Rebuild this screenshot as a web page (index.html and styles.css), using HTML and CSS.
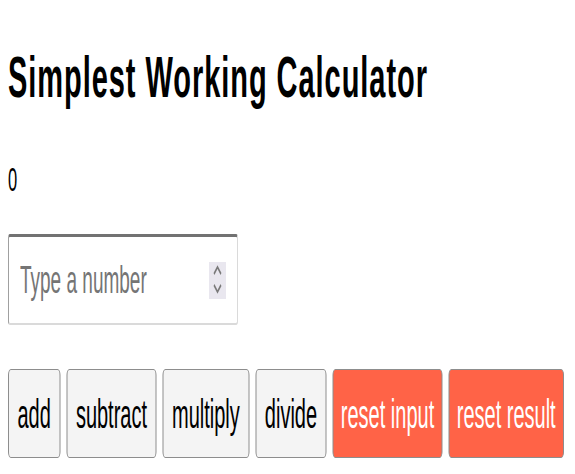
FILE: index.html
```html
<!DOCTYPE html>
<html lang="en">
<head>
<meta charset="utf-8">
<title>Simplest Working Calculator</title>
<link rel="stylesheet" href="styles.css">
</head>
<body>
<div class="page">
  <div class="stage">
    <h1 class="title">Simplest Working Calculator</h1>
    <p class="result">0</p>
    <div class="field">
      <input class="field-input" type="text" placeholder="Type a number">
      <span class="spinner">
        <svg class="spinner-icon" viewBox="0 0 34 37" width="34" height="37" aria-hidden="true">
          <polyline points="10,12 17,5 24,12" />
          <polyline points="10,23 17,30 24,23" />
        </svg>
      </span>
    </div>
    <div class="actions">
      <button class="btn">add</button>
      <button class="btn">subtract</button>
      <button class="btn">multiply</button>
      <button class="btn">divide</button>
      <button class="btn btn-reset">reset input</button>
      <button class="btn btn-reset">reset result</button>
    </div>
  </div>
</div>
</body>
</html>
```
FILE: styles.css
```css
html, body {
  margin: 0;
  padding: 0;
  overflow: hidden;
  background: #ffffff;
}

.page {
  width: 575px;
  height: 474px;
  overflow: hidden;
}

.stage {
  width: 1150px;
  box-sizing: border-box;
  padding-left: 16px;
  transform: scaleX(0.5);
  transform-origin: 0 0;
  font-family: "Liberation Sans", Arial, sans-serif;
  color: #000000;
  display: flex;
  flex-direction: column;
  align-items: flex-start;
}

.title {
  margin: 45px 0 0;
  font-size: 58px;
  line-height: 64px;
  font-weight: 700;
  letter-spacing: 1.9px;
}

.result {
  margin: 52px 0 0;
  font-size: 33px;
  line-height: 38px;
}

.field {
  margin-top: 35px;
  width: 460px;
  height: 91px;
  box-sizing: border-box;
  border-style: solid;
  border-width: 3px 2px 2px 2px;
  border-color: #727272 #dadada #dadada #a0a0a0;
  border-radius: 4px;
  display: flex;
  align-items: center;
  padding: 0 22px;
}

.field-input {
  flex: 1;
  min-width: 0;
  border: 0;
  outline: 0;
  background: transparent;
  padding: 0;
  margin: 0;
  font-family: inherit;
  font-size: 38px;
  line-height: 44px;
  color: #000000;
}

.field-input::placeholder {
  color: #757575;
  opacity: 1;
}

.spinner {
  width: 34px;
  height: 37px;
  background: #e9e7ef;
  display: flex;
}

.spinner-icon {
  fill: none;
  stroke: #7a7a7a;
  stroke-width: 2.6;
}

.actions {
  margin-top: 44px;
  display: flex;
  gap: 12px;
}

.btn {
  height: 89px;
  padding: 0 17px;
  border: 1px solid #8d8d8d;
  border-left-width: 2px;
  border-right-width: 2px;
  border-radius: 6px;
  background: #f4f4f4;
  font-family: inherit;
  font-size: 40px;
  line-height: 1;
  color: #000000;
}

.btn-reset {
  padding: 0 14.5px;
  background: #ff6347;
  color: #ffffff;
}
```
